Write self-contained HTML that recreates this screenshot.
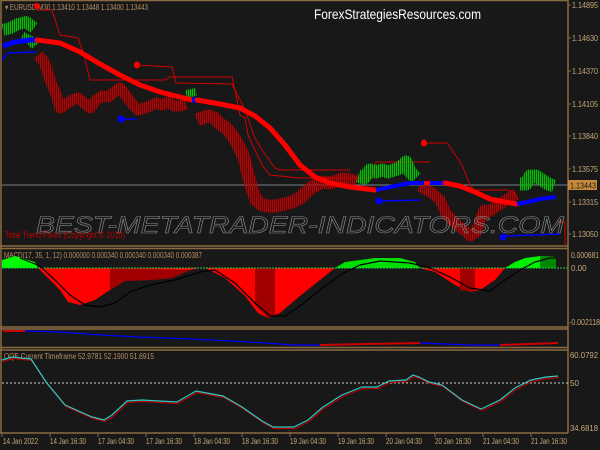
<!DOCTYPE html>
<html><head><meta charset="utf-8"><style>
html,body{margin:0;padding:0;background:#181818;}
svg{display:block}
text{font-family:"Liberation Sans",sans-serif;}
</style></head><body>
<svg width="600" height="450" viewBox="0 0 600 450" xmlns="http://www.w3.org/2000/svg">
<defs>
<pattern id="pr" patternUnits="userSpaceOnUse" width="2" height="4"><rect width="1.3" height="4" fill="#c00000"/></pattern>
<pattern id="pg" patternUnits="userSpaceOnUse" width="2" height="4"><rect width="1.3" height="4" fill="#00c000"/></pattern>
</defs>
<rect width="600" height="450" fill="#181818"/>
<g stroke="#8a6a40" stroke-width="1.5" fill="none">
<line x1="1" y1="0" x2="1" y2="433"/>
<line x1="568" y1="0" x2="568" y2="433"/>
<line x1="1" y1="0.5" x2="568" y2="0.5"/>
<line x1="0" y1="246" x2="568" y2="246"/>
<line x1="0" y1="248.5" x2="568" y2="248.5"/>
<line x1="0" y1="327" x2="568" y2="327"/>
<line x1="0" y1="329" x2="568" y2="329"/>
<line x1="0" y1="347.5" x2="568" y2="347.5"/>
<line x1="0" y1="350" x2="568" y2="350"/>
<line x1="0" y1="433" x2="568" y2="433"/>
</g>
<g stroke="#8a6a40" stroke-width="1">
<line x1="568" y1="5" x2="571" y2="5"/><line x1="568" y1="38" x2="571" y2="38"/><line x1="568" y1="71" x2="571" y2="71"/><line x1="568" y1="104" x2="571" y2="104"/><line x1="568" y1="136" x2="571" y2="136"/><line x1="568" y1="169" x2="571" y2="169"/><line x1="568" y1="202" x2="571" y2="202"/><line x1="568" y1="234" x2="571" y2="234"/>
</g>
<g fill="#c8a878" font-size="8">
<text x="572" y="8" textLength="26" lengthAdjust="spacingAndGlyphs">1.14895</text><text x="572" y="41" textLength="26" lengthAdjust="spacingAndGlyphs">1.14630</text><text x="572" y="74" textLength="26" lengthAdjust="spacingAndGlyphs">1.14370</text><text x="572" y="107" textLength="26" lengthAdjust="spacingAndGlyphs">1.14105</text><text x="572" y="139" textLength="26" lengthAdjust="spacingAndGlyphs">1.13840</text><text x="572" y="172" textLength="26" lengthAdjust="spacingAndGlyphs">1.13575</text><text x="572" y="205" textLength="26" lengthAdjust="spacingAndGlyphs">1.13315</text><text x="572" y="237" textLength="26" lengthAdjust="spacingAndGlyphs">1.13050</text>
</g>
<line x1="2" y1="185" x2="568" y2="185" stroke="#7a7f86" stroke-width="1"/>
<rect x="568" y="180" width="29" height="10" fill="#c88a3a"/>
<text x="570" y="188.5" fill="#1a1a1a" font-size="8" textLength="26" lengthAdjust="spacingAndGlyphs">1.13443</text>

<text x="5" y="10" fill="#b89060" font-size="8" textLength="143" lengthAdjust="spacingAndGlyphs">▾ EURUSD,M30  1.13410 1.13448 1.13400 1.13443</text>
<text x="314" y="19" fill="#ffffff" font-size="14" font-family="Liberation Sans Narrow, Liberation Sans, sans-serif" textLength="167" lengthAdjust="spacingAndGlyphs">ForexStrategiesResources.com</text>

<g stroke="#d00000" stroke-width="1" fill="none">
<polyline points="37,10 52,10 60,35 78,38 84,55 90,80 165,80 170,77 232,77 236,95 240,115 245,118 248,135 255,150 262,165 270,175 300,178 338,178 365,178 372,178 376,162 430,162"/>
<polyline points="137,65 172,67 176,83 232,84 245,110 252,130 255,138 262,150 275,168 280,170 350,170"/>
<polyline points="424,143 447,143 452,150 462,165 470,185 474,190 508,190 515,193 518,200"/>
<polyline points="558,222 565,222 565,245"/>
</g>
<circle cx="37" cy="6" r="3" fill="#ff0000"/>
<ellipse cx="137" cy="65" rx="3" ry="3.5" fill="#ff0000"/>
<ellipse cx="424" cy="143" rx="3" ry="3.5" fill="#ff0000"/>
<g stroke="#0000ff" stroke-width="1.5" fill="none">
<polyline points="2,60 8,53 36,52"/>
<line x1="121" y1="119" x2="137" y2="119"/>
<line x1="379" y1="201" x2="420" y2="200"/>
<line x1="503" y1="236" x2="560" y2="234"/>
</g>
<circle cx="121" cy="119" r="3.5" fill="#0000ff"/>
<circle cx="379" cy="201" r="3.5" fill="#0000ff"/>
<circle cx="503" cy="237" r="3.5" fill="#0000ff"/>

<!-- price bars -->
<g fill="none" stroke-linejoin="round">
<polyline stroke="url(#pg)" stroke-width="12" points="3,30 10,28 18,24 26,22 34,28"/>
<polyline stroke="url(#pg)" stroke-width="9" points="22,36 30,40 35,46"/>
<polyline stroke="url(#pr)" stroke-width="11" points="38,55 44,62 50,80 56,95 60,108 66,104 72,100 78,98 84,103 90,108 96,100 102,96 108,97 114,92 120,88 126,96 132,104 138,110 144,108 150,106 156,103 162,105 168,102 174,106 180,106 186,104"/>
<polyline stroke="url(#pg)" stroke-width="8" points="186,94 196,92"/>
<polyline stroke="url(#pr)" stroke-width="13" points="197,120 202,118 208,116 214,118 220,124 226,128 232,135 238,145 244,158 248,175 252,190 256,200 262,205 268,206 276,206 284,204 292,202 300,198 306,192 312,187 318,184 324,182 330,183 336,181 342,179 350,180 356,182"/>
<polyline stroke="url(#pg)" stroke-width="13" points="358,176 364,178 370,170 376,172 382,170 388,172 394,170 400,168 406,162 410,172 416,178"/>
<polyline stroke="url(#pr)" stroke-width="11" points="420,186 426,190 432,193 440,200 446,214 452,220 458,226 464,230 470,236 476,232 480,220 484,210 488,212 494,208 500,204 506,200 512,196 516,194"/>
<polyline stroke="url(#pg)" stroke-width="13" points="520,184 526,184 530,176 536,176 542,180 548,184 554,186"/>
</g>

<polyline points="3,46 15,42 30,40 37,40" stroke="#0000ff" stroke-width="5" fill="none"/>
<polyline points="37,40 60,43 80,52 100,64 120,75 140,85 160,92 192,100" stroke="#ff0000" stroke-width="5" fill="none" stroke-linecap="round"/>
<polyline points="192,100 197,100" stroke="#0000ff" stroke-width="5"/>
<polyline points="197,100 220,104 240,108 255,116 270,128 285,145 300,165 315,177 330,183 350,187 375,190" stroke="#ff0000" stroke-width="5" fill="none" stroke-linecap="round"/>
<polyline points="376,190 395,186 410,183 445,183" stroke="#0000ff" stroke-width="4" fill="none"/>
<polyline points="424,183 430,183 M437,183 440,183" stroke="#ff0000" stroke-width="4" fill="none"/>
<polyline points="445,183 460,186 475,192 490,199 505,202 517,204" stroke="#ff0000" stroke-width="5" fill="none" stroke-linecap="round"/>
<polyline points="517,204 528,202 540,199 556,197" stroke="#0000ff" stroke-width="4" fill="none"/>

<text x="36" y="233" font-size="24" font-style="italic" fill="none" stroke="#8a8a8a" stroke-width="0.6" textLength="528" lengthAdjust="spacingAndGlyphs">BEST-METATRADER-INDICATORS.COM</text>
<text x="5" y="238" fill="#c00000" font-size="9" textLength="120" lengthAdjust="spacingAndGlyphs">Total Trend Forex (Copyright © 2010)</text>

<text x="4" y="258" fill="#b89060" font-size="8" textLength="198" lengthAdjust="spacingAndGlyphs">MACD(17, 35, 1, 12) 0.000000 0.000340 0.000340 0.000340 0.000387</text>
<path d="M2,268 L2,260 L15,256 L35,262 L38,268 Z" fill="#00ff00"/>
<path d="M38,268 L45,275 L60,290 L68,302 L80,305 L95,300 L110,290 L125,281 L150,280 L172,278 L190,270 L200,268 L205,268 L225,278 L245,296 L258,313 L268,318 L280,313 L300,296 L320,280 L335,268 Z" fill="#ff0000"/>
<path d="M110,268 L110,290 L125,281 L150,280 L172,278 L190,270 Z M255,268 L255,305 L268,318 L275,316 L275,268 Z" fill="#a00000"/>
<path d="M335,268 L345,262 L360,260 L375,258 L400,258 L415,262 L420,268 Z" fill="#00dd00"/>
<path d="M420,268 L435,272 L455,285 L470,292 L480,290 L495,280 L505,268 Z" fill="#ff0000"/>
<path d="M460,268 L460,290 L475,292 L475,268 Z" fill="#a00000"/>
<path d="M505,268 L515,262 L525,258 L540,256 L555,257 L556,268 Z" fill="#00ee00"/>
<path d="M540,268 L540,256 L556,258 L556,268 Z" fill="#008800"/>
<line x1="2" y1="268" x2="568" y2="268" stroke="#22cc44" stroke-width="1" stroke-dasharray="2 1"/>
<polyline points="20,258 40,266 55,280 70,295 85,305 100,307 115,303 130,292 150,285 175,280 200,272 215,270 235,283 255,303 270,316 285,316 300,306 320,290 340,275 360,265 380,261 410,263 430,268 450,277 470,288 490,291 505,280 520,270 535,262 550,258 556,258" stroke="#000" stroke-width="1.2" fill="none"/>
<g fill="#c8a878" font-size="8"><text x="571" y="258" textLength="28" lengthAdjust="spacingAndGlyphs">0.000681</text><text x="571" y="271">0.00</text><text x="569" y="325" textLength="31" lengthAdjust="spacingAndGlyphs">-0.002118</text></g>

<polyline points="3,331 25,331" stroke="#ff0000" stroke-width="1.5"/>
<polyline points="25,331 60,332 100,335 140,337 190,339 250,342 295,345 320,345" stroke="#0000ff" stroke-width="1.2" fill="none"/>
<polyline points="320,345 365,344 420,343" stroke="#cc0000" stroke-width="2" fill="none"/>
<polyline points="420,343 470,345 500,345" stroke="#0000ff" stroke-width="1.2" fill="none"/>
<polyline points="500,345 530,344 558,343" stroke="#cc0000" stroke-width="2" fill="none"/>

<text x="4" y="359" fill="#b89060" font-size="8" textLength="150" lengthAdjust="spacingAndGlyphs">QQE Current Timeframe 52.9781 52.1900 51.6915</text>
<line x1="2" y1="383" x2="568" y2="383" stroke="#cccccc" stroke-width="1" stroke-dasharray="2 2"/>
<polyline transform="translate(1,1.5)" stroke="#b00000" stroke-width="1.2" fill="none" points="2,360 12,357 31,359 46,382 65,405 92,417 104,420 112,415 127,401 142,400 177,402 196,391 223,396 242,407 262,421 273,427 294,427 308,420 323,407 342,395 362,387 377,387 389,381 406,380 413,375 419,377 429,382 442,385 462,400 481,409 500,400 515,388 531,380 546,377 558,376"/>
<polyline stroke="#30c8c8" stroke-width="1.2" fill="none" points="2,360 12,357 31,359 46,382 65,405 92,417 104,420 112,415 127,401 142,400 177,402 196,391 223,396 242,407 262,421 273,427 294,427 308,420 323,407 342,395 362,387 377,387 389,381 406,380 413,375 419,377 429,382 442,385 462,400 481,409 500,400 515,388 531,380 546,377 558,376"/>
<g fill="#c8a878" font-size="8"><text x="570" y="358" textLength="28" lengthAdjust="spacingAndGlyphs">60.0792</text><text x="570" y="386">50</text><text x="570" y="431" textLength="28" lengthAdjust="spacingAndGlyphs">34.6818</text></g>

<g stroke="#8a6a40" stroke-width="1">
<line x1="2" y1="433" x2="2" y2="437"/><line x1="50" y1="433" x2="50" y2="437"/><line x1="98" y1="433" x2="98" y2="437"/><line x1="146" y1="433" x2="146" y2="437"/><line x1="194" y1="433" x2="194" y2="437"/><line x1="242" y1="433" x2="242" y2="437"/><line x1="290" y1="433" x2="290" y2="437"/><line x1="338" y1="433" x2="338" y2="437"/><line x1="386" y1="433" x2="386" y2="437"/><line x1="435" y1="433" x2="435" y2="437"/><line x1="483" y1="433" x2="483" y2="437"/><line x1="531" y1="433" x2="531" y2="437"/>
</g>
<g fill="#c8a878" font-size="8">
<text x="3" y="444" textLength="35" lengthAdjust="spacingAndGlyphs">14 Jan 2022</text><text x="50" y="444" textLength="36" lengthAdjust="spacingAndGlyphs">14 Jan 16:30</text><text x="98" y="444" textLength="36" lengthAdjust="spacingAndGlyphs">17 Jan 04:30</text><text x="146" y="444" textLength="36" lengthAdjust="spacingAndGlyphs">17 Jan 16:30</text><text x="194" y="444" textLength="36" lengthAdjust="spacingAndGlyphs">18 Jan 04:30</text><text x="242" y="444" textLength="36" lengthAdjust="spacingAndGlyphs">18 Jan 16:30</text><text x="290" y="444" textLength="36" lengthAdjust="spacingAndGlyphs">19 Jan 04:30</text><text x="338" y="444" textLength="36" lengthAdjust="spacingAndGlyphs">19 Jan 16:30</text><text x="386" y="444" textLength="36" lengthAdjust="spacingAndGlyphs">20 Jan 04:30</text><text x="435" y="444" textLength="36" lengthAdjust="spacingAndGlyphs">20 Jan 16:30</text><text x="483" y="444" textLength="36" lengthAdjust="spacingAndGlyphs">21 Jan 04:30</text><text x="531" y="444" textLength="36" lengthAdjust="spacingAndGlyphs">21 Jan 16:30</text>
</g>
</svg>
</body></html>
